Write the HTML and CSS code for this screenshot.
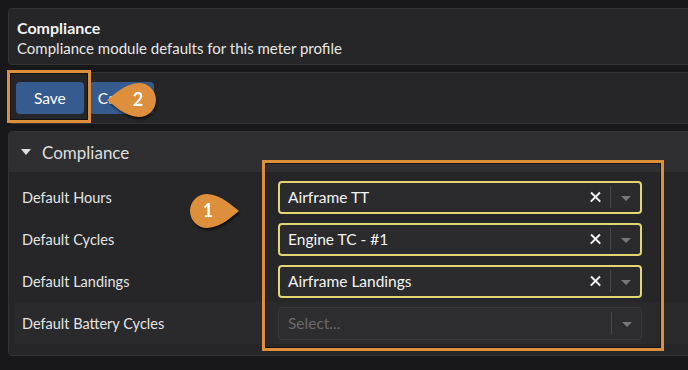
FILE: index.html
```html
<!DOCTYPE html>
<html lang="en">
<head>
  <meta charset="UTF-8">
  <meta name="viewport" content="width=device-width, initial-scale=1.0">
  <title>Compliance</title>
  <link rel="stylesheet" href="styles.css">
</head>
<body>
  <div class="page">
    <div class="card intro">
      <h1>Compliance</h1>
      <p>Compliance module defaults for this meter profile</p>
    </div>

    <div class="card toolbar">
      <button class="btn">Save</button>
      <button class="btn btn-cancel">Cancel</button>
    </div>

    <div class="card panel">
      <div class="panel-head">
        <span class="caret"></span>
        <span>Compliance</span>
      </div>
      <div class="panel-body">
        <div class="row">
          <label>Default Hours</label>
          <div class="select filled">
            <span class="value">Airframe TT</span>
            <span class="clear"></span>
            <span class="sep"></span>
            <span class="arrow"></span>
          </div>
        </div>
        <div class="row">
          <label>Default Cycles</label>
          <div class="select filled">
            <span class="value">Engine TC - #1</span>
            <span class="clear"></span>
            <span class="sep"></span>
            <span class="arrow"></span>
          </div>
        </div>
        <div class="row">
          <label>Default Landings</label>
          <div class="select filled">
            <span class="value">Airframe Landings</span>
            <span class="clear"></span>
            <span class="sep"></span>
            <span class="arrow"></span>
          </div>
        </div>
        <div class="row alt">
          <label>Default Battery Cycles</label>
          <div class="select">
            <span class="value placeholder">Select...</span>
            <span class="sep"></span>
            <span class="arrow"></span>
          </div>
        </div>
      </div>
    </div>
  </div>

  <!-- annotation overlays -->
  <div class="mark mark-save"></div>
  <div class="mark mark-fields"></div>

  <svg class="callout callout-2" width="52" height="38" viewBox="0 0 52 38">
    <path d="M2 19 C10 13 19 3 34 2 A17 17 0 0 1 34 36 C19 35 10 25 2 19 Z" />
    <text x="33" y="25">2</text>
  </svg>
  <svg class="callout callout-1" width="52" height="38" viewBox="0 0 52 38">
    <path d="M50 19 C42 13 33 3 18 2 A17 17 0 0 0 18 36 C33 35 42 25 50 19 Z" />
    <text x="19" y="25">1</text>
  </svg>
</body>
</html>
```

FILE: styles.css
```css
body {
  margin: 0;
  background-color: #18181a;
  color: #e8e8e8;
  font-family: Lato, "Noto Sans", sans-serif;
  overflow: hidden;
}

.page {
  width: 700px;
  padding: 8px 0 0 8px;
}

.card {
  background-color: #262628;
  border: 1px solid #333335;
  border-radius: 4px;
  margin-bottom: 7px;
}

.intro {
  padding: 9px 8px 7px;
}

.intro h1 {
  margin: 0;
  font-size: 16px;
  font-weight: 700;
  color: #f2f2f2;
}

.intro p {
  margin: 2px 0 0;
  font-size: 15px;
  color: #e6e6e6;
}

.toolbar {
  display: flex;
  gap: 6px;
  padding: 9px 7px;
}

.btn {
  height: 32px;
  padding: 0 18px;
  background-color: #355b8f;
  color: #fff;
  border: none;
  border-radius: 4px;
  font-family: inherit;
  font-size: 15.5px;
}

.btn-cancel {
  width: 64px;
  padding: 0 8px;
  text-align: left;
  overflow: hidden;
  white-space: nowrap;
}

.panel {
  padding-bottom: 11px;
}

.panel-head {
  display: flex;
  align-items: center;
  gap: 11px;
  height: 40px;
  padding-left: 12px;
  background-color: #2f2f31;
  font-size: 17px;
  color: #dedede;
}

.caret {
  width: 0;
  height: 0;
  border-left: 5px solid transparent;
  border-right: 5px solid transparent;
  border-top: 6px solid #e0e0e0;
}

.panel-body {
  padding-top: 4px;
}

.row {
  display: flex;
  align-items: center;
  height: 42px;
  margin: 0 6px;
  padding-left: 7px;
}

.row.alt {
  background-color: #2a2a2c;
}

.row label {
  width: 256px;
  font-size: 14.5px;
  color: #e4e4e4;
}

.select {
  display: flex;
  align-items: center;
  width: 364px;
  height: 33px;
  box-sizing: border-box;
  border: 1px solid #3a3a3c;
  border-radius: 4px;
  background-color: #2d2d2f;
}

.select.filled {
  border: 2px solid #e3d572;
  background-color: #2b2b2d;
}

.value {
  flex: 1;
  padding-left: 9px;
  font-size: 15.5px;
  color: #f4f4f4;
}

.select.filled .value {
  padding-left: 8px;
}

.placeholder {
  color: #6a6a6c;
}

.clear {
  position: relative;
  width: 11px;
  height: 11px;
  margin-right: 9px;
}

.clear::before,
.clear::after {
  content: "";
  position: absolute;
  left: -1px;
  top: 4px;
  width: 13px;
  height: 2.4px;
  background-color: #f0f0f0;
}

.clear::before {
  transform: rotate(45deg);
}

.clear::after {
  transform: rotate(-45deg);
}

.sep {
  width: 1px;
  height: 22px;
  background-color: #48484a;
}

.arrow {
  width: 0;
  height: 0;
  margin: 2px 9px 0 10px;
  border-left: 5px solid transparent;
  border-right: 5px solid transparent;
  border-top: 5px solid #77777a;
}

.mark {
  position: absolute;
  border: 3px solid #de8f3b;
  box-shadow: inset 0 0 0 1px rgba(0, 0, 0, 0.5);
}

.mark-save {
  left: 7px;
  top: 70px;
  width: 78px;
  height: 47px;
}

.mark-fields {
  left: 262px;
  top: 160px;
  width: 396px;
  height: 185px;
}

.callout {
  position: absolute;
  filter: drop-shadow(1px 2px 1px rgba(0, 0, 0, 0.6));
}

.callout path {
  fill: #de8f3b;
}

.callout text {
  fill: #fff;
  font-family: Lato, "Noto Sans", sans-serif;
  font-size: 18px;
  font-weight: 700;
  text-anchor: middle;
}

.callout-2 {
  left: 105px;
  top: 81px;
}

.callout-1 {
  left: 189px;
  top: 192px;
}
```
